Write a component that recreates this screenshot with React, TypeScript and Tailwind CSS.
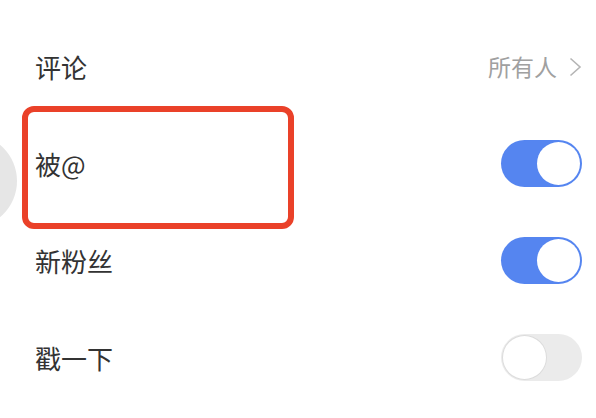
const rows = [
  { label: "评论", kind: "link", value: "所有人" },
  { label: "被@", kind: "toggle", on: true },
  { label: "新粉丝", kind: "toggle", on: true },
  { label: "戳一下", kind: "toggle", on: false },
];

const Toggle = ({ on }: { on: boolean }) => (
  <div
    className={`w-[81px] h-[47px] rounded-full flex items-center p-[2px] ${
      on ? "bg-[#5585f0] justify-end" : "bg-[#ebebeb] justify-start"
    }`}
  >
    <div
      className={`w-[43px] h-[43px] rounded-full bg-white ${
        on ? "" : "shadow-[0_0_0_1px_#dcdcdc]"
      }`}
    />
  </div>
);

export default function App() {
  return (
    <div
      className="relative w-[596px] h-[418px] bg-white overflow-hidden"
      style={{ fontFamily: '"Noto Sans CJK SC", "Noto Sans", sans-serif' }}
    >
      <div className="absolute left-[-77px] top-[134px] w-[94px] h-[94px] rounded-full bg-[#e6e6e6]" />
      <div className="relative flex flex-col pt-[18px] pl-[35px] pr-[14px]">
        {rows.map((r) => (
          <div key={r.label} className="h-[97px] flex items-center justify-between">
            <span className="text-[26px] leading-none text-[#333333]">{r.label}</span>
            {r.kind === "link" ? (
              <div className="flex items-center gap-[12px] text-[23px] text-[#a0a0a0] leading-none">
                <span>{r.value}</span>
                <svg width="13" height="20" viewBox="0 0 13 20" fill="none">
                  <polyline points="1.5,1.5 11,10 1.5,18.5" stroke="#b5b5b5" strokeWidth="1.6" />
                </svg>
              </div>
            ) : (
              <Toggle on={!!r.on} />
            )}
          </div>
        ))}
      </div>
      <div className="absolute left-[22px] top-[106px] w-[272px] h-[123px] border-[6px] border-[#ea4129] rounded-[12px]" />
    </div>
  );
}
